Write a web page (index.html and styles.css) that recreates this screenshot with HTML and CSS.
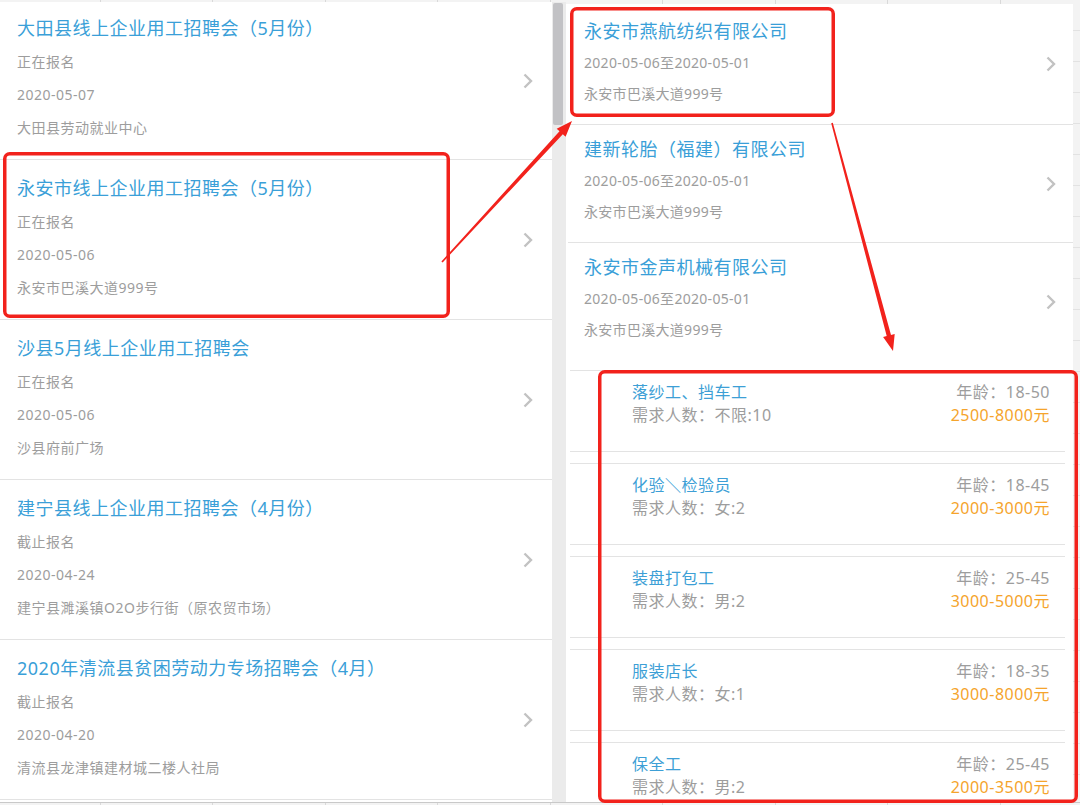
FILE: index.html
```html
<!DOCTYPE html>
<html lang="zh-CN">
<head>
    <meta charset="utf-8">
    <title>线上招聘会</title>
    <link rel="stylesheet" href="styles.css">
</head>
<body>
    <div class="screen">
        <div class="events">
            <div class="event">
                <div class="info">
                    <h2>大田县线上企业用工招聘会（5月份）</h2>
                    <p>正在报名</p>
                    <p>2020-05-07</p>
                    <p>大田县劳动就业中心</p>
                </div>
                <svg class="chev" viewBox="0 0 10 16"><path d="M1.5 1.5 L8 8 L1.5 14.5"/></svg>
            </div>
            <div class="event">
                <div class="info">
                    <h2>永安市线上企业用工招聘会（5月份）</h2>
                    <p>正在报名</p>
                    <p>2020-05-06</p>
                    <p>永安市巴溪大道999号</p>
                </div>
                <svg class="chev" viewBox="0 0 10 16"><path d="M1.5 1.5 L8 8 L1.5 14.5"/></svg>
            </div>
            <div class="event">
                <div class="info">
                    <h2>沙县5月线上企业用工招聘会</h2>
                    <p>正在报名</p>
                    <p>2020-05-06</p>
                    <p>沙县府前广场</p>
                </div>
                <svg class="chev" viewBox="0 0 10 16"><path d="M1.5 1.5 L8 8 L1.5 14.5"/></svg>
            </div>
            <div class="event">
                <div class="info">
                    <h2>建宁县线上企业用工招聘会（4月份）</h2>
                    <p>截止报名</p>
                    <p>2020-04-24</p>
                    <p>建宁县濉溪镇O2O步行街（原农贸市场）</p>
                </div>
                <svg class="chev" viewBox="0 0 10 16"><path d="M1.5 1.5 L8 8 L1.5 14.5"/></svg>
            </div>
            <div class="event">
                <div class="info">
                    <h2>2020年清流县贫困劳动力专场招聘会（4月）</h2>
                    <p>截止报名</p>
                    <p>2020-04-20</p>
                    <p>清流县龙津镇建材城二楼人社局</p>
                </div>
                <svg class="chev" viewBox="0 0 10 16"><path d="M1.5 1.5 L8 8 L1.5 14.5"/></svg>
            </div>
        </div>

        <div class="scrollbar"><div class="thumb"></div></div>

        <div class="detail">
            <div class="company">
                <div class="info">
                    <h2>永安市燕航纺织有限公司</h2>
                    <p>2020-05-06至2020-05-01</p>
                    <p>永安市巴溪大道999号</p>
                </div>
                <svg class="chev" viewBox="0 0 10 16"><path d="M1.5 1.5 L8 8 L1.5 14.5"/></svg>
            </div>
            <div class="company">
                <div class="info">
                    <h2>建新轮胎（福建）有限公司</h2>
                    <p>2020-05-06至2020-05-01</p>
                    <p>永安市巴溪大道999号</p>
                </div>
                <svg class="chev" viewBox="0 0 10 16"><path d="M1.5 1.5 L8 8 L1.5 14.5"/></svg>
            </div>
            <div class="company">
                <div class="info">
                    <h2>永安市金声机械有限公司</h2>
                    <p>2020-05-06至2020-05-01</p>
                    <p>永安市巴溪大道999号</p>
                </div>
                <svg class="chev" viewBox="0 0 10 16"><path d="M1.5 1.5 L8 8 L1.5 14.5"/></svg>
            </div>

            <div class="jobs">
                <div class="job">
                    <div class="job-left">
                        <h3>落纱工、挡车工</h3>
                        <p>需求人数：不限:10</p>
                    </div>
                    <div class="job-right">
                        <p>年龄：18-50</p>
                        <p class="pay">2500-8000元</p>
                    </div>
                </div>
                <div class="job">
                    <div class="job-left">
                        <h3>化验＼检验员</h3>
                        <p>需求人数：女:2</p>
                    </div>
                    <div class="job-right">
                        <p>年龄：18-45</p>
                        <p class="pay">2000-3000元</p>
                    </div>
                </div>
                <div class="job">
                    <div class="job-left">
                        <h3>装盘打包工</h3>
                        <p>需求人数：男:2</p>
                    </div>
                    <div class="job-right">
                        <p>年龄：25-45</p>
                        <p class="pay">3000-5000元</p>
                    </div>
                </div>
                <div class="job">
                    <div class="job-left">
                        <h3>服装店长</h3>
                        <p>需求人数：女:1</p>
                    </div>
                    <div class="job-right">
                        <p>年龄：18-35</p>
                        <p class="pay">3000-8000元</p>
                    </div>
                </div>
                <div class="job">
                    <div class="job-left">
                        <h3>保全工</h3>
                        <p>需求人数：男:2</p>
                    </div>
                    <div class="job-right">
                        <p>年龄：25-45</p>
                        <p class="pay">2000-3500元</p>
                    </div>
                </div>
            </div>
        </div>
    </div>

    <!-- red annotation marks drawn over the screenshot -->
    <svg class="marks" width="1080" height="805" viewBox="0 0 1080 805">
        <rect x="4.75" y="153.75" width="443.5" height="162.5" rx="5"/>
        <rect x="571.75" y="8.75" width="261.5" height="106.5" rx="5"/>
        <rect x="599.75" y="371.75" width="476.5" height="429.5" rx="5"/>
        <polygon points="441.4,261.5 559.5,131.3 556.7,128.7 572,121 565.6,136.8 562.8,134.3 442.6,262.5"/>
        <polygon points="831.2,123.2 886.7,336.1 883.1,337.1 893,351 894.7,334 891,335 832.8,122.8"/>
    </svg>
</body>
</html>
```

FILE: styles.css
```css
html, body {
    margin: 0;
    padding: 0;
}

body {
    width: 1080px;
    height: 805px;
    overflow: hidden;
    position: relative;
    font-family: "Noto Sans", "Noto Sans CJK SC", sans-serif;
    background-color: #f3f3f3;
    background-image:
        repeating-linear-gradient(90deg, transparent 0 100px, #d9d9d9 100px 101px, transparent 101px 112.5px),
        repeating-linear-gradient(180deg, transparent 0 30px, #e2e2e2 30px 31px);
}

h2, h3, p {
    margin: 0;
    font-weight: normal;
}

.screen {
    display: flex;
    height: 800px;
    padding-top: 2px;
    border-bottom: 1px solid #c9c9c9;
}

/* left list of job fairs */
.events {
    width: 552px;
    background: #fff;
}

.event {
    display: flex;
    align-items: center;
    justify-content: space-between;
    height: 160px;
    box-sizing: border-box;
    padding: 0 19px 0 17px;
    border-bottom: 1px solid #e3e3e3;
}

.event:first-child {
    height: 158px;
}

.event .info {
    align-self: flex-start;
    padding-top: 12px;
}

.event:first-child .info {
    padding-top: 10px;
}

.event h2 {
    font-size: 18px;
    line-height: 33px;
    letter-spacing: 0.5px;
    color: #3a9fd8;
}

.event p {
    font-size: 14px;
    line-height: 33px;
    letter-spacing: 0.5px;
    color: #9d9d9d;
}

.chev {
    width: 10px;
    height: 16px;
    flex: none;
}

.chev path {
    fill: none;
    stroke: #c2c2c2;
    stroke-width: 2.4;
}

.scrollbar {
    width: 14px;
    background: #ebebeb;
}

.thumb {
    width: 10px;
    height: 122px;
    margin: 1px 0 0 1px;
    border-radius: 2px;
    background: #c2c2c5;
}

/* right detail: companies and jobs */
.detail {
    width: 505px;
    padding-left: 2px;
    margin-top: 2px;
    background: #fff;
    overflow: hidden;
}

.company {
    display: flex;
    align-items: center;
    justify-content: space-between;
    height: 118px;
    box-sizing: border-box;
    padding: 0 17px 0 16px;
    border-bottom: 1px solid #e3e3e3;
}

.company:first-child {
    height: 121px;
}

.company:nth-child(3) {
    border-bottom: none;
}

.company .info {
    align-self: flex-start;
    padding-top: 9px;
}

.company:first-child .info {
    padding-top: 12px;
}

.company h2 {
    font-size: 18px;
    line-height: 31px;
    letter-spacing: 0.5px;
    color: #3a9fd8;
}

.company p {
    font-size: 14px;
    line-height: 31px;
    letter-spacing: 0.3px;
    color: #9d9d9d;
}

.jobs {
    margin: 9px 8px 0 2px;
}

.job {
    display: flex;
    justify-content: space-between;
    padding: 10px 15px 24px 62px;
    margin-bottom: 11px;
    border-top: 1px solid #e3e3e3;
    border-bottom: 1px solid #e3e3e3;
}

.job h3 {
    font-size: 16px;
    line-height: 23px;
    letter-spacing: 0.5px;
    color: #3d9fd6;
}

.job p {
    font-size: 16px;
    line-height: 23px;
    letter-spacing: 0.5px;
    color: #9d9d9d;
}

.job-right {
    text-align: right;
}

.job .pay {
    color: #f5a42c;
}

.marks {
    position: absolute;
    top: 0;
    left: 0;
    pointer-events: none;
}

.marks rect {
    fill: none;
    stroke: #f2221c;
    stroke-width: 3.5;
}

.marks polygon {
    fill: #f2221c;
}
```
